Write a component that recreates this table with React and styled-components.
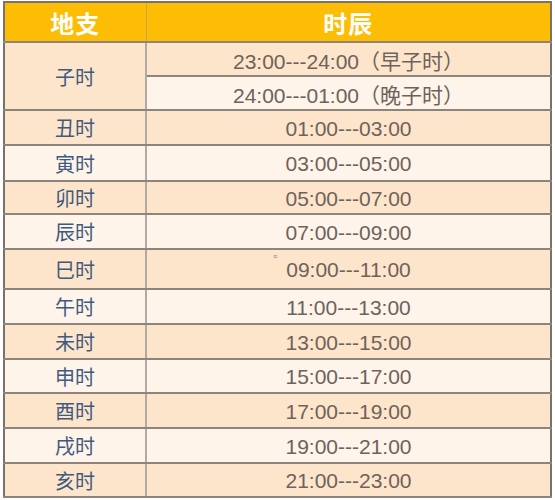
import React from "react";
import styled, { createGlobalStyle } from "styled-components";

const GlobalStyle = createGlobalStyle`
  body {
    margin: 0;
    background: #ffffff;
    font-family: "Liberation Sans", "Noto Sans CJK SC", sans-serif;
  }
`;

const Page = styled.div`
  padding: 1px 3px 0 3px;
`;

const Table = styled.table`
  width: 549px;
  border-collapse: collapse;
  table-layout: fixed;
  border: 2px solid #77726d;
`;

const HeadCell = styled.th`
  background: #fdbd05;
  color: #ffffff;
  font-family: "Noto Sans CJK SC", sans-serif;
  font-size: 24px;
  font-weight: 700;
  height: 38px;
  padding: 0;
  border-right: 1px solid #c9a550;
  border-bottom: 2px solid #8d857c;
  letter-spacing: 1px;
`;

const NameCell = styled.td`
  background: ${(p) => (p.$light ? "#fef4ea" : "#fde5cb")};
  color: #3e5a7e;
  font-family: "Noto Sans CJK SC", sans-serif;
  font-size: 20px;
  text-align: center;
  padding: 0;
  border-right: 2px solid #b3aba3;
  border-bottom: 2px solid #8d857c;
`;

const TimeCell = styled.td`
  background: ${(p) => (p.$light ? "#fef4ea" : "#fde5cb")};
  color: #6f625a;
  font-size: 21px;
  text-align: center;
  padding: 2px 0 0 0;
  height: ${(p) => p.$h}px;
  border-bottom: 2px solid #8d857c;
  white-space: nowrap;
`;

const Mark = styled.span`
  position: absolute;
  left: 273px;
  top: 253px;
  font-size: 7px;
  color: #8a7f76;
`;

const rows = [
  ["丑时", "01:00---03:00", 33],
  ["寅时", "03:00---05:00", 34],
  ["卯时", "05:00---07:00", 31],
  ["辰时", "07:00---09:00", 33],
  ["巳时", "09:00---11:00", 38],
  ["午时", "11:00---13:00", 33],
  ["未时", "13:00---15:00", 33],
  ["申时", "15:00---17:00", 32],
  ["酉时", "17:00---19:00", 33],
  ["戌时", "19:00---21:00", 33],
  ["亥时", "21:00---23:00", 32],
];

export default function App() {
  return (
    <Page>
      <GlobalStyle />
      <Mark>≡</Mark>
      <Table>
        <colgroup>
          <col style={{ width: "142px" }} />
          <col />
        </colgroup>
        <thead>
          <tr>
            <HeadCell>地支</HeadCell>
            <HeadCell>时辰</HeadCell>
          </tr>
        </thead>
        <tbody>
          <tr>
            <NameCell rowSpan={2}>子时</NameCell>
            <TimeCell $h={30}>23:00---24:00（早子时）</TimeCell>
          </tr>
          <tr>
            <TimeCell $h={27} $light>
              24:00---01:00（晚子时）
            </TimeCell>
          </tr>
          {rows.map(([name, time, h], i) => (
            <tr key={name}>
              <NameCell $light={i % 2 === 1}>{name}</NameCell>
              <TimeCell $h={h - 2} $light={i % 2 === 1}>
                {time}
              </TimeCell>
            </tr>
          ))}
        </tbody>
      </Table>
    </Page>
  );
}
